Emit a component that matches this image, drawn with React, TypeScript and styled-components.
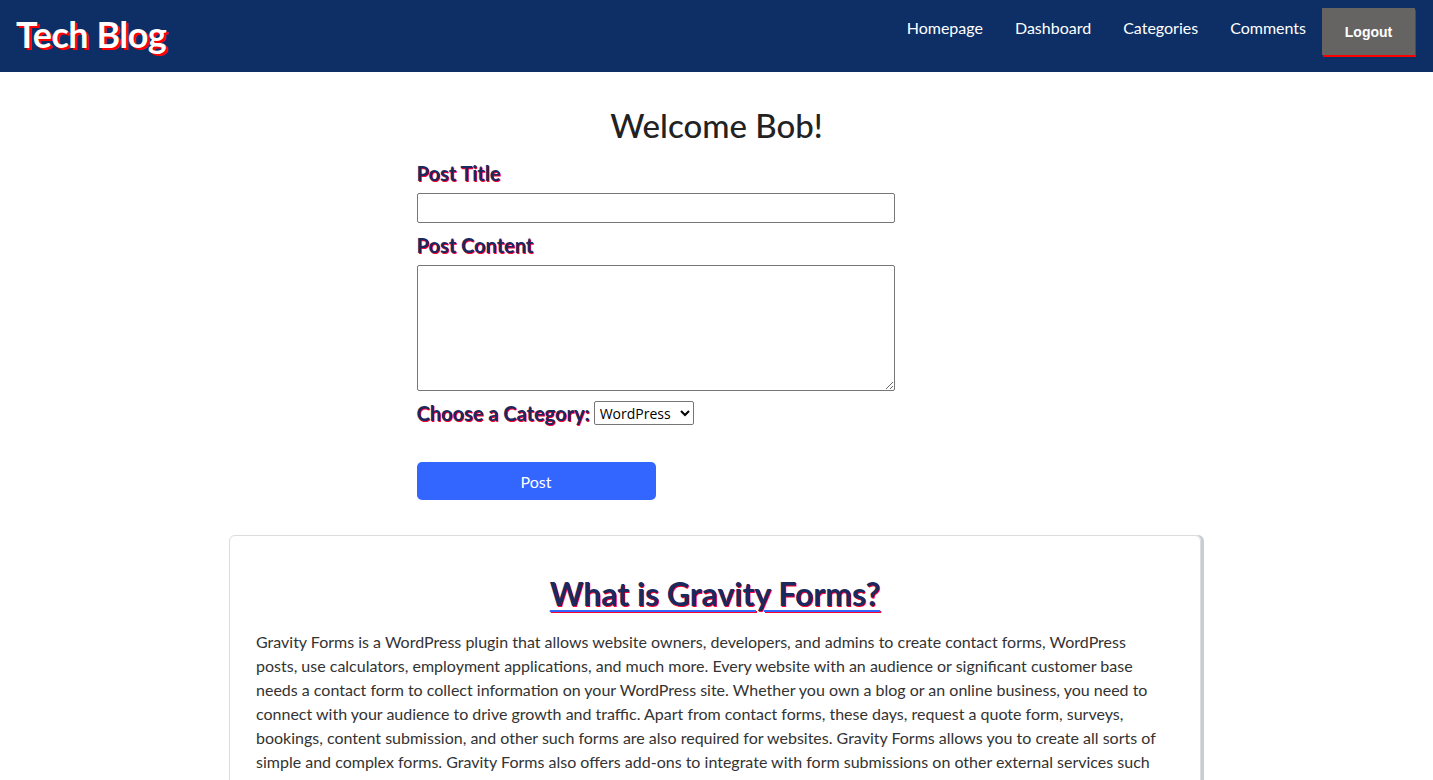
import React from "react";
import styled, { createGlobalStyle } from "styled-components";

const Global = createGlobalStyle`
  html, body { margin: 0; padding: 0; background: #fff; }
  body { font-family: "Lato", "Open Sans", sans-serif; color: #222; }
  * { box-sizing: border-box; }
`;

const NavBar = styled.header`
  height: 72px;
  background: #0d2f66;
  display: flex;
  align-items: flex-start;
  justify-content: space-between;
  padding: 0 18px 0 16px;
`;

const Logo = styled.h1`
  margin: 0;
  padding-top: 13px;
  font-size: 36px;
  line-height: 42px;
  font-weight: 700;
  color: #fff;
  text-shadow: 2px 2px 0 #ff0000;
  letter-spacing: -0.5px;
`;

const Links = styled.nav`
  display: flex;
  align-items: flex-start;
`;

const NavLink = styled.a`
  color: #fff;
  font-size: 16px;
  line-height: 20px;
  padding: 18px 16px 0;
  text-decoration: none;
  cursor: pointer;
`;

const LogoutButton = styled.button`
  margin-top: 8px;
  width: 93px;
  height: 47px;
  border: none;
  background: #666462;
  color: #fff;
  font-family: "Liberation Sans", Arial, sans-serif;
  font-weight: 700;
  font-size: 14px;
  box-shadow: 1px 2px 0 #ff0000;
  cursor: pointer;
`;

const Main = styled.main`
  display: flex;
  flex-direction: column;
  align-items: center;
`;

const Welcome = styled.h2`
  margin: 33px 0 0;
  font-size: 33px;
  line-height: 40px;
  font-weight: 500;
  color: #222;
`;

const Form = styled.form`
  width: 600px;
  display: flex;
  flex-direction: column;
  align-items: flex-start;
`;

const Label = styled.label<{ $top: number }>`
  font-size: 20px;
  line-height: 24px;
  font-weight: 700;
  color: #1a2a5e;
  text-shadow: 1px 1px 0 #ff0033;
  margin-top: ${(p) => p.$top}px;
  margin-bottom: 8px;
`;

const TextInput = styled.input`
  width: 478px;
  height: 30px;
  border: 1px solid #767676;
  border-radius: 2px;
  padding: 2px 4px;
  font-size: 14px;
`;

const TextArea = styled.textarea`
  width: 478px;
  height: 126px;
  border: 1px solid #767676;
  border-radius: 2px;
  resize: vertical;
  display: block;
`;

const CategoryRow = styled.div`
  display: flex;
  align-items: center;
  gap: 4px;
  margin-top: 10px;
`;

const InlineLabel = styled.label`
  font-size: 20px;
  line-height: 24px;
  font-weight: 700;
  color: #1a2a5e;
  text-shadow: 1px 1px 0 #ff0033;
`;

const Select = styled.select`
  height: 24px;
  width: 100px;
  font-family: "Open Sans", sans-serif;
  font-size: 14px;
  border: 1px solid #767676;
  border-radius: 2px;
  background: #fff;
  color: #000;
  padding: 0 1px;
`;

const PostButton = styled.button`
  margin-top: 37px;
  width: 239px;
  height: 38px;
  border: none;
  border-radius: 5px;
  background: #3366ff;
  color: #fff;
  font-family: "Lato", sans-serif;
  font-size: 16px;
  cursor: pointer;
`;

const Card = styled.article`
  margin: 35px 3px 0 0;
  width: 972px;
  border: 1px solid #dcdcdc;
  border-radius: 6px;
  box-shadow: 3px 0 0 #c8ccd6;
  padding: 32px 26px 24px;
  display: flex;
  flex-direction: column;
  align-items: center;
`;

const CardTitle = styled.h3`
  margin: 4px 0 14px;
  font-size: 32px;
  line-height: 44px;
  font-weight: 700;
  color: #1a2a5e;
  text-decoration: underline;
  text-decoration-color: #3366ff;
  text-decoration-thickness: 2px;
  text-underline-offset: 4px;
  text-shadow: 1px 1px 0 #ff0033;
`;

const Paragraph = styled.p`
  margin: 0;
  max-width: 912px;
  font-size: 16px;
  line-height: 24px;
  color: #333;
  align-self: flex-start;
`;

export default function App() {
  return (
    <>
      <Global />
      <NavBar>
        <Logo>Tech Blog</Logo>
        <Links>
          <NavLink>Homepage</NavLink>
          <NavLink>Dashboard</NavLink>
          <NavLink>Categories</NavLink>
          <NavLink>Comments</NavLink>
          <LogoutButton>Logout</LogoutButton>
        </Links>
      </NavBar>
      <Main>
        <Welcome>Welcome Bob!</Welcome>
        <Form onSubmit={(e) => e.preventDefault()}>
          <Label $top={16}>Post Title</Label>
          <TextInput type="text" />
          <Label $top={10}>Post Content</Label>
          <TextArea />
          <CategoryRow>
            <InlineLabel>Choose a Category:</InlineLabel>
            <Select defaultValue="WordPress">
              <option>WordPress</option>
              <option>JavaScript</option>
              <option>React</option>
            </Select>
          </CategoryRow>
          <PostButton type="submit">Post</PostButton>
        </Form>
        <Card>
          <CardTitle>What is Gravity Forms?</CardTitle>
          <Paragraph>
            Gravity Forms is a WordPress plugin that allows website owners, developers, and admins to create contact forms, WordPress
            posts, use calculators, employment applications, and much more. Every website with an audience or significant customer base
            needs a contact form to collect information on your WordPress site. Whether you own a blog or an online business, you need to
            connect with your audience to drive growth and traffic. Apart from contact forms, these days, request a quote form, surveys,
            bookings, content submission, and other such forms are also required for websites. Gravity Forms allows you to create all sorts of
            simple and complex forms. Gravity Forms also offers add-ons to integrate with form submissions on other external services such
            as PayPal, Stripe, Mailchimp, HubSpot, and many more.
          </Paragraph>
        </Card>
      </Main>
    </>
  );
}
